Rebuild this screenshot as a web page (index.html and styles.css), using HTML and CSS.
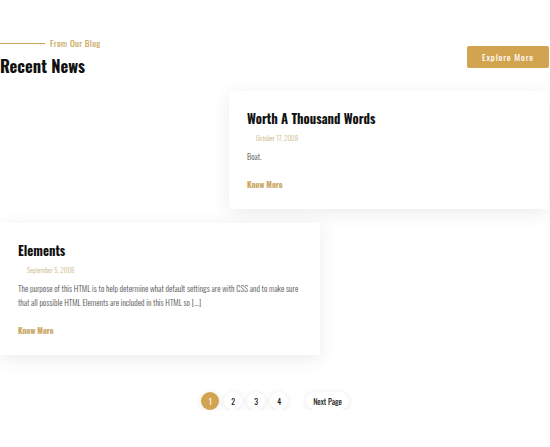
FILE: index.html
```html
<!DOCTYPE html>
<html lang="en">

<head>
    <meta charset="UTF-8">
    <meta name="viewport" content="width=device-width, initial-scale=1.0">
    <title>Recent News</title>
    <link rel="stylesheet" href="styles.css">
</head>

<body>
    <section class="blog">
        <div class="blog-head">
            <div>
                <p class="eyebrow"><span class="eyebrow-line"></span>From Our Blog</p>
                <h1>Recent News</h1>
            </div>
            <a class="btn" href="#">Explore More</a>
        </div>

        <div class="post-row right">
            <article class="post">
                <h2>Worth A Thousand Words</h2>
                <p class="date">October 17, 2008</p>
                <p class="excerpt">Boat.</p>
                <a class="more" href="#">Know More</a>
            </article>
        </div>

        <div class="post-row">
            <article class="post">
                <h2>Elements</h2>
                <p class="date">September 5, 2008</p>
                <p class="excerpt">The purpose of this HTML is to help determine what default settings are with CSS and to make sure that all possible HTML Elements are included in this HTML so [...]</p>
                <a class="more" href="#">Know More</a>
            </article>
        </div>

        <!--pagination-->
        <nav class="pager">
            <a class="page active" href="#">1</a>
            <a class="page" href="#">2</a>
            <a class="page" href="#">3</a>
            <a class="page" href="#">4</a>
            <a class="next" href="#">Next Page</a>
        </nav>
    </section>
</body>

</html>
```

FILE: styles.css
```css
body {
    margin: 0;
    background-color: #fff;
    font-family: Oswald, "DejaVu Sans Condensed", sans-serif;
    overflow: hidden;
}

a {
    text-decoration: none;
}

.blog {
    width: 550px;
    padding-top: 36px;
}

.blog-head {
    display: flex;
    justify-content: space-between;
    align-items: flex-start;
    padding-right: 1px;
}

.eyebrow {
    display: flex;
    align-items: center;
    gap: 5px;
    margin: 0;
    color: #c9a55e;
    font-size: 9px;
    line-height: 14px;
    letter-spacing: 0.3px;
}

.eyebrow-line {
    display: inline-block;
    width: 45px;
    height: 1px;
    background-color: #c9a55e;
}

h1 {
    margin: 5px 0 0;
    color: #111;
    font-size: 16.5px;
    font-weight: bold;
    line-height: 22px;
}

.btn {
    margin-top: 10px;
    width: 82px;
    height: 22px;
    line-height: 22px;
    text-align: center;
    background-color: #d3a44f;
    border-radius: 2px;
    color: #fff;
    font-size: 9px;
    letter-spacing: 0.8px;
}

.post-row {
    display: flex;
}

.post-row.right {
    margin-top: 14px;
    padding-left: 229px;
}

.post-row + .post-row {
    margin-top: 14px;
}

.post {
    box-sizing: border-box;
    width: 320px;
    background-color: #fff;
    box-shadow: 0 4px 18px rgba(0, 0, 0, 0.08);
    padding: 18px 18px 16px;
}

.post h2 {
    margin: 0;
    color: #111;
    font-size: 12.8px;
    font-weight: bold;
    line-height: 20px;
}

.date {
    margin: 3px 0 0;
    padding-left: 9px;
    color: #cbb67f;
    font-size: 7px;
    font-weight: 300;
    line-height: 12px;
}

.excerpt {
    margin: 5px 0 0;
    color: #555;
    font-size: 8.4px;
    font-weight: 300;
    line-height: 14px;
}

.more {
    display: inline-block;
    margin-top: 15px;
    color: #c9a55e;
    font-size: 8px;
    font-weight: bold;
    line-height: 12px;
}

.pager {
    display: flex;
    justify-content: center;
    align-items: center;
    gap: 5px;
    margin-top: 37px;
}

.page,
.next {
    height: 18px;
    line-height: 18px;
    background-color: #fff;
    box-shadow: 0 1px 6px rgba(0, 0, 0, 0.1);
    color: #111;
    font-size: 8px;
    text-align: center;
}

.page {
    width: 18px;
    border-radius: 50%;
}

.page.active {
    background-color: #d3a44f;
    color: #fff;
}

.next {
    margin-left: 13px;
    padding: 0 7px;
    border-radius: 10px;
}
```
